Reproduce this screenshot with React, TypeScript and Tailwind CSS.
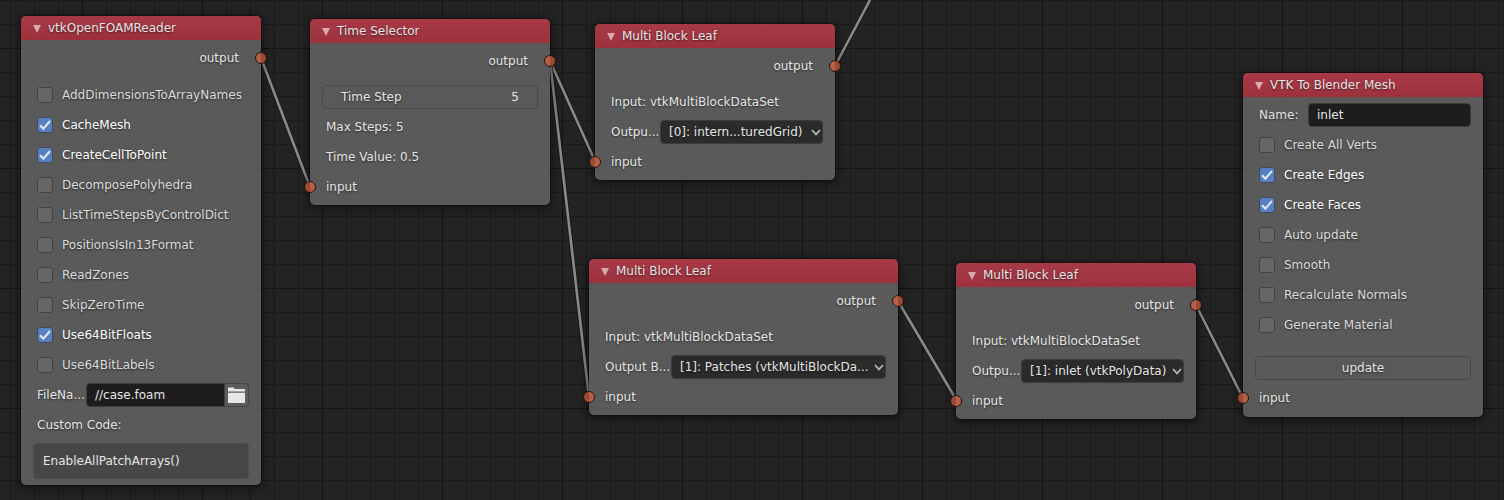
import React, { useId, useState } from "react";
import clsx from "clsx";

const textShadow = "[text-shadow:0_1px_2px_rgba(0,0,0,0.55)]";
const rowBase = "flex h-[30px] items-center whitespace-nowrap";

type SocketKind = "input" | "output";

function Socket({ kind }: { kind: SocketKind }) {
  return (
    <span
      className={clsx(
        "absolute top-1/2 size-3 -translate-y-1/2 rounded-full border border-[#1e1410]",
        kind === "input"
          ? "-left-1.5 bg-linear-to-r from-[#9c4a31] from-50% to-[#b66049] to-50%"
          : "-right-1.5 bg-linear-to-r from-[#b66049] from-50% to-[#9c4a31] to-50%",
      )}
    />
  );
}

function SocketRow({ kind }: { kind: SocketKind }) {
  return (
    <div className={clsx("relative", rowBase, kind === "input" ? "pl-4" : "justify-end pr-[22px]")}>
      <Socket kind={kind} />
      {kind}
    </div>
  );
}

function Node({ title, place, children }: { title: string; place: string; children: React.ReactNode }) {
  return (
    <section
      className={clsx(
        "absolute rounded-[5px] bg-[#606060]/90 shadow-[0_0_0_1px_rgba(0,0,0,0.25),0_2px_8px_2px_rgba(0,0,0,0.45)]",
        textShadow,
        place,
      )}
    >
      <header className="flex h-6 items-center gap-[7px] rounded-t-[5px] bg-linear-to-b from-[#a83a48] to-[#9c313c] pl-3">
        <svg viewBox="0 0 8 8" className="mt-0.5 size-2 fill-[#dba9ae]" aria-hidden="true">
          <path d="M0 0H8L4 8Z" />
        </svg>
        <h2>{title}</h2>
      </header>
      {children}
    </section>
  );
}

function Check({ label, initial = false }: { label: string; initial?: boolean }) {
  const [on, setOn] = useState(initial);
  return (
    <label className={clsx(rowBase, "gap-[9px] pl-4", on ? "text-white" : "text-[#dcdcdc]")}>
      <span className="grid size-4 shrink-0">
        <input
          type="checkbox"
          checked={on}
          onChange={(e) => setOn(e.target.checked)}
          className="col-start-1 row-start-1 size-4 appearance-none rounded-[3px] border border-[#424242] bg-[#666666] checked:border-[#434a58] checked:bg-[#5680c2]"
        />
        {on && (
          <svg viewBox="0 0 16 16" className="pointer-events-none col-start-1 row-start-1 size-4" aria-hidden="true">
            <path d="M3 8.2L6.4 11.6L13 4" fill="none" stroke="#dfe7f5" strokeWidth="2.1" />
          </svg>
        )}
      </span>
      {label}
    </label>
  );
}

function TextRow({ children }: { children: React.ReactNode }) {
  return <div className={clsx(rowBase, "pl-4")}>{children}</div>;
}

function SelectRow({ label, value, wide = false }: { label: string; value: string; wide?: boolean }) {
  const id = useId();
  return (
    <div className={clsx(rowBase, "pr-3 pl-4")}>
      <label htmlFor={id} className={clsx("shrink-0", wide ? "w-[66px]" : "w-[49px]")}>
        {label}
      </label>
      <div className="grid min-w-0 grow items-center">
        <select
          id={id}
          className={clsx(
            "col-start-1 row-start-1 h-6 w-full appearance-none rounded border border-[#3c3c3c] bg-[#2b2b2b] pl-2 text-[#e6e6e6]",
            textShadow,
          )}
        >
          <option>{value}</option>
        </select>
        <svg
          viewBox="0 0 10 7"
          className="pointer-events-none col-start-1 row-start-1 mr-0.5 h-[7px] w-2.5 justify-self-end"
          aria-hidden="true"
        >
          <path d="M1 1L5 5.4L9 1" fill="none" stroke="#b4b4b4" strokeWidth="1.8" />
        </svg>
      </div>
    </div>
  );
}

function LeafNode({ place, label, value, wide }: { place: string; label: string; value: string; wide?: boolean }) {
  return (
    <Node title="Multi Block Leaf" place={clsx(place, "pb-[3px]")}>
      <div className="pt-[3px] pb-1.5">
        <SocketRow kind="output" />
      </div>
      <TextRow>Input: vtkMultiBlockDataSet</TextRow>
      <SelectRow label={label} value={value} wide={wide} />
      <SocketRow kind="input" />
    </Node>
  );
}

const links = ["M261 58L310 187", "M550 61L595 161", "M550 61L589 397", "M835 66L870 0", "M898 301L957 401", "M1196 305L1243 398"];

export default function App() {
  const nameId = useId();
  const fileId = useId();
  const codeId = useId();
  const stepId = useId();

  return (
    <main className="relative h-screen overflow-hidden bg-[#232323] font-['DejaVu_Sans',sans-serif] text-[12px] leading-4 text-[#e6e6e6]">
      <svg className="absolute inset-0 size-full" aria-hidden="true">
        <defs>
          <pattern id="minor" x="82" y="0" width="24" height="24" patternUnits="userSpaceOnUse">
            <path d="M0.5 0V24M0 0.5H24" stroke="#1b1b1b" />
          </pattern>
          <pattern id="major" x="82" y="48" width="120" height="120" patternUnits="userSpaceOnUse">
            <path d="M0.5 0V120M0 0.5H120" stroke="#131313" />
          </pattern>
        </defs>
        <rect width="100%" height="100%" fill="url(#minor)" />
        <rect width="100%" height="100%" fill="url(#major)" />
        {links.map((d) => (
          <g key={d} fill="none">
            <path d={d} stroke="#141414" strokeOpacity="0.7" strokeWidth="4.5" />
            <path d={d} stroke="#8a8a8a" strokeWidth="2.6" />
          </g>
        ))}
      </svg>

      <Node title="vtkOpenFOAMReader" place="left-[21px] top-4 w-60 pb-1.5">
        <div className="pt-[3px] pb-1.5">
          <SocketRow kind="output" />
        </div>
        <div className="pt-px">
          <Check label="AddDimensionsToArrayNames" />
          <Check label="CacheMesh" initial />
          <Check label="CreateCellToPoint" initial />
          <Check label="DecomposePolyhedra" />
          <Check label="ListTimeStepsByControlDict" />
          <Check label="PositionsIsIn13Format" />
          <Check label="ReadZones" />
          <Check label="SkipZeroTime" />
          <Check label="Use64BitFloats" initial />
          <Check label="Use64BitLabels" />
        </div>
        <div className={clsx(rowBase, "pr-3 pl-4")}>
          <label htmlFor={fileId} className="w-[49px] shrink-0">FileNa...</label>
          <input
            id={fileId}
            defaultValue="//case.foam"
            className="h-6 min-w-0 grow rounded-l border border-[#3c3c3c] bg-[#1d1d1d] px-2"
          />
          <button aria-label="Browse files" className="grid size-6 shrink-0 place-items-center rounded-r border border-l-0 border-[#454545] bg-[#5c5c5c]">
            <svg viewBox="0 0 17 16" className="h-4 w-[17px] fill-[#e6e6e6]" aria-hidden="true">
              <path d="M0 4.6V0.5H6V2H17V4.6ZM0 5.8H17V15.2Q17 16 16 16H1Q0 16 0 15.2Z" />
            </svg>
          </button>
        </div>
        <div className={clsx(rowBase, "pl-4")}>
          <label htmlFor={codeId}>Custom Code:</label>
        </div>
        <div className="flex px-3 pt-[3px]">
          <input
            id={codeId}
            defaultValue="EnableAllPatchArrays()"
            className="h-9 min-w-0 grow rounded border border-[#4d4d4d] bg-[#474747] px-[9px]"
          />
        </div>
      </Node>

      <Node title="Time Selector" place="left-[310px] top-[19px] w-60 pb-[3px]">
        <div className="pt-[3px] pb-1.5">
          <SocketRow kind="output" />
        </div>
        <div className={clsx(rowBase, "px-3")}>
          <div className="flex h-6 min-w-0 grow items-center rounded border border-[#4a4a4a] bg-[#595959] px-[18px]">
            <label htmlFor={stepId} className="grow">Time Step</label>
            <input id={stepId} defaultValue="5" className="w-10 bg-transparent text-right" />
          </div>
        </div>
        <TextRow>Max Steps: 5</TextRow>
        <TextRow>Time Value: 0.5</TextRow>
        <SocketRow kind="input" />
      </Node>

      <LeafNode place="left-[595px] top-6 w-60" label="Outpu..." value="[0]: intern...turedGrid)" />
      <LeafNode place="left-[589px] top-[259px] w-[309px]" label="Output B..." value="[1]: Patches (vtkMultiBlockDa..." wide />
      <LeafNode place="left-[956px] top-[263px] w-60" label="Outpu..." value="[1]: inlet (vtkPolyData)" />

      <Node title="VTK To Blender Mesh" place="left-[1243px] top-[73px] w-60 pb-1">
        <div className={clsx(rowBase, "mt-[3px] pr-3 pl-4")}>
          <label htmlFor={nameId} className="w-[49px] shrink-0">Name:</label>
          <input
            id={nameId}
            defaultValue="inlet"
            className="h-6 min-w-0 grow rounded border border-[#3c3c3c] bg-[#1d1d1d] px-2"
          />
        </div>
        <Check label="Create All Verts" />
        <Check label="Create Edges" initial />
        <Check label="Create Faces" initial />
        <Check label="Auto update" />
        <Check label="Smooth" />
        <Check label="Recalculate Normals" />
        <Check label="Generate Material" />
        <div className={clsx(rowBase, "mt-[13px] px-3")}>
          <button className={clsx("h-6 grow rounded border border-[#454545] bg-[#595959]", textShadow)}>update</button>
        </div>
        <SocketRow kind="input" />
      </Node>
    </main>
  );
}
